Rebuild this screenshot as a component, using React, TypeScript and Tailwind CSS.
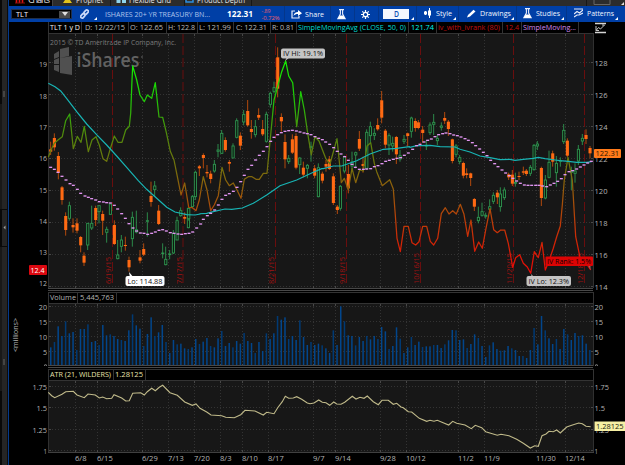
import React from "react";

/* Series are digitised in thirds of a pixel, relative to a local origin. */
type Pt = [number, number];
const trace = (ox: number, oy: number, s: string): Pt[] =>
  s.trim().split(/\s+/).map((p) => {
    const [x, y] = p.split(",").map(Number);
    return [ox + x / 3, oy + y / 3];
  });
const line = (pts: Pt[]) => pts.map(([x, y]) => `${x.toFixed(1)},${y.toFixed(1)}`).join(" ");

const ma50 = [
  ...trace(0, 80, "145,10 165,20 182,33 205,62 230,95 260,132 292,166 320,195 350,228 380,262 415,302 440,328"),
  ...trace(0, 180, "470,55 500,82 525,96 560,104 585,105 600,102"),
  ...trace(200, 165, "0,146 20,145 40,140 75,132 95,133 127,129 160,115 200,90 240,62 290,45 340,22 365,11"),
  ...trace(200, 40, "370,386 400,378 425,378 470,362 510,342 550,328 590,325 628,320"),
  ...trace(410, 70, "0,232 20,227 60,226 90,230 135,231 150,238 180,246 210,258 240,263 270,269 300,268 315,271 340,268 370,265 385,262 405,266 435,270 450,272 475,274 500,277 530,277 545,275"),
];

const ma20 = [
  ...trace(0, 80, "152,262 163,268 174,277 186,289 198,300 210,311 220,316 232,328"),
  ...trace(0, 180, "242,40 255,48 265,52 275,56 287,60 298,65 310,66 320,68 331,69 343,76 353,87 365,101 376,115 387,131 399,144 410,153 421,159 432,160 443,163 455,160 466,156 477,151 488,149 499,153 511,158 522,160 534,162 545,163 556,161 567,160 578,156 590,144"),
  ...trace(200, 165, "2,177 10,163 22,152 32,145 44,135 55,120 66,103 77,91 88,86 100,79 111,67 122,50 133,31 144,13"),
  ...trace(200, 40, "155,376 167,360 178,346 190,334 201,320 212,304 222,292 233,284 244,278 255,274 266,272 277,271 289,273 300,276 312,279 322,281 333,284 345,290 356,295 367,299 377,306 389,313 401,323 412,334 423,342 434,350 445,361 456,373 466,382 478,388 490,388 500,387 512,386 523,380 534,377 546,371 557,364 568,361 580,358 591,355 602,353 613,346 625,339"),
  ...trace(410, 70, "8,238 20,227 30,223 42,216 53,211 64,207 75,200 86,194 98,191 108,189 120,191 131,195 142,197 153,201 165,206 175,211 187,218 197,227 209,237 220,247 231,257 242,271 254,281 264,290 276,300 287,309 298,317 309,325 320,333 331,340 343,345 354,346 365,346 377,346 387,346 398,348 410,350 421,345 432,340 443,334 454,326 465,314 477,305 488,302 500,297 511,291 522,285 533,279 544,274"),
];

const iv = [
  ...trace(0, 80, "145,232 153,210 163,190 175,179 187,170 197,122 209,102 220,206 232,169 243,187 253,139 265,215 276,180 288,170 298,195 309,236 320,244 331,206 343,168 354,187 366,187 377,150 388,139 392,100 396,0"),
  ...trace(0, 0, "398,198 410,240"),
  ...trace(0, 80, "420,45 433,65 442,45 455,55 466,8 477,111 488,112 499,157 511,214 522,240 533,295"),
  ...trace(180, 100, "3,285 14,249 26,322 37,323 48,332 58,300 70,230 81,270 92,332 103,315 115,287 126,202 137,240 148,257 160,249 171,270 183,295 193,238 205,230 216,230 228,238 238,238 250,220 261,220"),
  ...trace(200, 40, "222,180 245,95 257,63 266,108 278,128 290,260 302,155 313,210 323,280 334,345 345,290 357,303 377,355 390,372 411,296 420,385"),
  ...trace(200, 165, "424,53 433,40 445,75 456,10 467,53 479,15 490,18"),
  ...trace(200, 40, "501,318 512,308 523,370"),
  ...trace(200, 165, "530,20 547,62 569,44 580,72 586,150 591,220 601,260 612,184 625,184"),
  ...trace(410, 180, "6,188 17,195 27,185 38,139 50,139 61,184 71,195 83,175 94,101 106,83 117,102 128,92 139,102 151,73 162,103 173,169 183,120 194,214 206,186 217,205 228,145 240,86 251,149 262,158 272,150 284,150 295,190 308,262 317,233 329,224 340,250 352,261 362,280 373,215 385,233 396,187 406,270 418,240 430,205 440,170 451,138 457,75 463,0 474,-68 487,0 497,170 510,232 520,240 532,255 542,270"),
];

const atr = [
  ...trace(0, 285, "145,322 155,332 164,338 186,328 197,320 220,319 231,330 253,338 264,327 286,330 298,339 308,336 320,341 335,340 342,329 365,339 377,348 388,347 398,325 422,323 433,330 442,320 455,310 466,317 478,307 488,301 510,323 532,331 554,351 577,361 588,357 600,370 620,381 633,390 665,392 677,397 703,398 722,389 735,376 765,378 790,390 800,382 822,386 833,368 847,350 856,334 866,340 880,339 890,335 905,343 922,354 930,356"),
  ...trace(310, 285, "0,356 12,354 26,345 37,352 48,353 59,361 71,351 80,357 93,358 104,352 127,334 138,342 150,337 162,340 172,333 190,350 205,359 216,346 235,346 250,358 260,355 273,366 280,368 295,380 305,381 328,400 350,409 360,406 372,409 382,406 416,420 428,409 440,415 465,420 484,431 496,421 515,428 527,440 562,451 573,448 597,452 620,463 640,475 661,489 674,482 685,484 696,452 708,447 717,439 730,440 740,435 751,444 770,426 785,421 806,414 817,416 828,424 842,425"),
];

/* x, high, body top, body bottom, low, up/down */
type Candle = { x: number; h: number; t: number; b: number; l: number; up: boolean };
const candles = (ox: number, oy: number, s: string): Candle[] =>
  s.trim().split(/\s+/).map((c) => {
    const up = c.endsWith("g");
    const [x, h, t, b, l] = c.slice(0, -1).split(",").map(Number);
    return { x: ox + x / 3, h: oy + h / 3, t: oy + t / 3, b: oy + b / 3, l: oy + l / 3, up };
  });

const bars: Candle[] = [
  ...candles(0, 80, "152,185,208,215,225o 163,160,174,202,212o 175,216,228,278,298o"),
  ...candles(0, 180, "186,18,22,60,74o 197,97,108,150,167o 208,65,77,115,122g 219,115,135,142,158o 231,115,130,152,160o 242,168,171,196,217o 252,217,227,248,258o 263,130,130,195,210g 275,77,130,144,150g 287,77,84,120,138o 297,77,77,95,130g 308,92,102,122,165o 320,140,148,157,188g 331,72,72,103,105g 343,121,135,192,195o 353,180,225,236,238g 364,165,180,199,217g 376,170,195,198,212o 387,230,240,262,275o 397,95,112,176,200g 409,92,149,156,160g 420,210,232,242,250o 431,190,207,224,228o 442,97,122,124,170g 453,5,48,66,80o 464,3,18,29,50g 476,75,92,132,135o 488,190,219,221,235g 497,200,238,254,256g 509,210,222,224,238g 520,150,160,219,222g 531,110,122,180,180g 542,82,92,107,110g 554,97,111,116,132o 565,85,85,143,145g"),
  ...candles(180, 100, "26,325,325,356,362g 37,285,290,320,324g 46,212,217,290,300g 58,195,199,205,228o 70,160,165,174,205o 81,195,216,220,232o 92,212,221,237,250o 103,180,193,213,218g 114,132,150,154,172g 125,90,100,160,162g 136,112,120,150,155o 148,180,186,191,215o 159,130,138,174,174g 170,55,62,112,115g 181,97,107,137,150o 191,30,43,66,76g 203,0,33,76,80o 214,60,87,96,116o 226,60,80,104,112g 236,25,45,53,60o 248,60,87,103,108o 259,35,43,124,128g"),
  ...candles(200, 40, "211,155,160,193,203g 222,125,143,154,160g 233,22,52,146,172o 244,220,231,244,275o"),
  ...candles(180, 100, "315,103,126,178,205o 326,165,175,185,192g 337,103,118,158,162o 348,100,108,203,208o 359,172,174,194,222g 370,185,203,224,232o 382,192,196,205,235g 393,125,140,142,185g 404,195,205,227,235o 415,190,203,290,292g 427,215,221,242,250o 438,180,192,200,215o 448,168,178,207,210o"),
  ...candles(200, 165, "400,25,34,114,120o 412,120,125,135,147o 421,60,64,130,137g 433,-28,-25,18,25g 445,0,27,70,85o"),
  ...candles(200, 40, "456,335,366,378,395g 467,335,338,345,385g 478,273,297,326,333o 489,350,372,378,398o 500,268,277,385,390g 511,245,260,287,310g 523,265,280,286,300g 533,235,255,268,272o 545,153,181,233,250o 556,267,272,314,325o 567,280,287,315,345g 578,290,310,318,335g 589,288,291,343,372o 600,330,347,357,365g 612,285,298,304,312g 623,278,280,288,320o"),
  ...candles(410, 70, "4,140,144,184,203g 16,145,153,174,185o 25,150,157,174,178o 38,168,179,189,218o 49,210,226,228,240g 60,157,165,188,195g 71,132,157,163,195g 82,195,205,212,225g 94,157,168,172,182g 104,126,144,152,162o 115,150,155,177,198o 127,206,208,273,280o 138,222,228,253,262g 149,255,263,275,283g 160,275,279,317,325o 170,295,310,315,325o 182,308,310,324,348o 296,308,313,322,330o 307,300,314,341,348o 316,308,337,340,350g 327,305,318,321,330o 340,290,304,308,315o 349,297,302,312,318o 361,285,292,310,318g 372,222,226,299,302g 382,213,222,228,240g 394,290,294,384,408o 406,315,330,384,388g 417,242,277,322,325g 428,242,250,275,290o 439,258,280,308,350g 451,262,272,274,290g 461,162,181,215,222g 472,205,212,257,262o 484,290,305,307,360g 495,280,303,310,338g 505,225,238,273,285g 517,192,205,213,225g 528,178,195,207,222o 540,228,234,250,265o"),
  ...candles(410, 180, "193,54,57,80,93o 205,80,112,122,130g 216,68,95,106,110g 227,98,106,109,116g 239,58,80,88,100g 250,37,46,64,72g 262,30,38,52,72o 271,22,42,80,95g 283,22,30,53,60g"),
];

/* Top of every volume bar, in thirds of a pixel below y = 285. */
const volume = [
  187, 171, 124, 153, 109, 145, 141, 195, 132, 132, 118, 171, 168, 180, 120, 151, 148, 153, 162, 165, 168, 136, 88, 121,
  131, 183, 147, 97, 153, 142, 120, 171, 204, 165, 178, 176, 190, 192, 187, 162, 177, 170, 159, 183, 187, 160, 138, 183,
  174, 187, 168, 176, 144, 168, 174, 204, 171, 198, 145, 162, 145, 93, 104, 97, 162, 153, 165, 106, 156, 180, 171, 180,
  176, 181, 190, 204, 136, 180, 64, 109, 151, 153, 181, 156, 168, 153, 163, 153, 162, 126, 139, 192, 183, 127, 161, 204,
  187, 156, 180, 170, 186, 184, 184, 180, 180, 189, 178, 166, 135, 136, 165, 163, 189, 177, 148, 159, 183, 216, 181, 172,
  192, 197, 196, 183, 190, 195, 213, 213, 219, 195, 129, 178, 93, 136, 160, 177, 162, 192, 132, 148, 165, 144, 153, 151,
  176, 195,
];

const weeks: [number, string][] = [
  [75.5, "6/8"], [97.5, "6/15"], [142.5, "6/29"], [168.5, "7/13"], [194.5, "7/20"], [220.5, "8/3"], [242.5, "8/10"],
  [268.5, "8/17"], [313.5, "9/7"], [335.5, "9/14"], [380.5, "9/28"], [406.5, "10/12"], [458.5, "11/2"], [484.5, "11/9"],
  [536.5, "11/30"], [565.5, "12/14"],
];
const expiries: [number, string][] = [
  [112.5, "6/19/15"], [183, "7/17/15"], [275.5, "8/21/15"], [346.5, "9/18/15"], [420.5, "10/16/15"],
  [513.5, "11/20/15"], [584.5, "12/18/15"],
];

const Grid = ({ top, bottom, rows }: { top: number; bottom: number; rows: number[] }) => (
  <g>
    <rect x="48" y={top} width="545" height={bottom - top} fill="#171717" />
    <g stroke="#333333" strokeWidth="1" strokeDasharray="1 2">
      {weeks.map(([x]) => <line key={x} x1={x} x2={x} y1={top} y2={bottom} />)}
      {rows.map((y) => <line key={y} x1="49" x2="593" y1={y} y2={y} />)}
    </g>
    <g stroke="#484848">
      {weeks.map(([x]) => <path key={x} d={`M${x} ${top}v2M${x} ${bottom - 2}v2`} />)}
      {rows.map((y) => <path key={y} d={`M48 ${y}h3M591 ${y}h3`} />)}
      <path d={`M48.5 ${top}V${bottom}M593.5 ${top}V${bottom}`} stroke="#303030" />
    </g>
  </g>
);

const Label = ({ x, y, w, children, anchor = "start", fill = "#b4b4b4" }: {
  x: number; y: number; w: number; children: string; anchor?: "start" | "end"; fill?: string;
}) => (
  <text x={x} y={y} textLength={w} lengthAdjust="spacingAndGlyphs" textAnchor={anchor} fill={fill} fontSize="7.8">
    {children}
  </text>
);

const Cell = ({ box, color = "", children }: { box: string; color?: string; children?: React.ReactNode }) => (
  <div className={`flex h-full shrink-0 items-center border-r border-[#333333] whitespace-nowrap ${box} ${color}`}>
    {children}
  </div>
);

/* A caption stretched to an exact width. */
const Fit = ({ w, size = 8, weight = 400, children }: { w: number; size?: number; weight?: number; children: string }) => (
  <svg width={w} height="11" className="block shrink-0 overflow-visible">
    <text x="0" y="8.4" textLength={w} lengthAdjust="spacingAndGlyphs" fontSize={size} fontWeight={weight} fill="currentColor">
      {children}
    </text>
  </svg>
);

const Corner = () => (
  <svg width="3" height="3" className="block"><path d="M3 0v3H0z" fill="#ffffff" /></svg>
);

const Flask = () => (
  <svg width="9" height="11" viewBox="0 0 9 11" className="block shrink-0">
    <path d="M2 .6h5M3.4 1v4L.9 9.6h7.2L5.6 5V1" fill="none" stroke="#e8eefc" strokeWidth="1.1" />
    <path d="M2.6 6.5h3.8L8 9.8H1z" fill="#ffffff" />
  </svg>
);

const Tool = ({ box, children }: { box: string; children: React.ReactNode }) => (
  <div className={`flex h-full shrink-0 items-end justify-between border-l border-[#04368a] pr-[2px] pb-[2px] ${box}`}>
    <div className="flex h-[14px] items-center gap-[4px]">{children}</div>
    <Corner />
  </div>
);

const TopTabs = () => (
  <div className="flex h-[6px] shrink-0 overflow-hidden bg-[#2c2c2c] text-[#e4e4e4]">
    <div className="flex w-[44px] items-end border-r border-[#454545] bg-black">
      <svg width="44" height="6" className="block">
        <path d="M7.5 0v3M10.5 0v3M13.5 0v3" stroke="#e01414" strokeWidth="1.6" />
        <path d="M6 3h10" stroke="#8c0c0c" />
        <text x="19" y="3" fontSize="9" textLength="22" fill="currentColor">Charts</text>
      </svg>
    </div>
    <svg width="504" height="6" className="block">
      <path d="M10 3l2-3h5l2 3z" fill="#e2c21c" />
      <text x="23" y="3" fontSize="9" textLength="27" lengthAdjust="spacingAndGlyphs" fill="currentColor">Prophet</text>
      <path d="M57.500 0v6M131.500 0v6M198.500 0v6" stroke="#171717" />
      <path d="M63.500 1h4M69 1h4" stroke="#8fd4ec" strokeWidth="4" />
      <text x="76" y="3" fontSize="9" textLength="42" lengthAdjust="spacingAndGlyphs" fill="currentColor">Flexible Grid</text>
      <path d="M133 0v2h7V0" fill="none" stroke="#2d8fe0" strokeWidth="1.500" />
      <text x="144" y="3" fontSize="9" textLength="48" lengthAdjust="spacingAndGlyphs" fill="currentColor">Product Depth</text>
    </svg>
    <svg width="68" height="6" className="block">
      <path d="M29.500 0v6" stroke="#171717" />
      <path d="M37 0v4.500h16V0" fill="none" stroke="#666666" />
      <path d="M67 2v3h-3z" fill="#dddddd" />
    </svg>
  </div>
);

const Toolbar = () => (
  <div className="flex h-[16px] shrink-0 items-center overflow-hidden bg-[#003fa6] text-[#f2f6ff]">
    <div className="ml-[2px] flex h-[10px] w-[61px] shrink-0 items-center justify-between border border-[#20304c] bg-black pl-[4px]">
      <Fit w={12} size={7.6}>TLT</Fit>
      <div className="mr-px flex h-[7px] w-[11px] items-center justify-center bg-[#4a4a4a]">
        <svg width="6" height="4" className="block"><path d="M0 0h6L3 4z" fill="#e0e0e0" /></svg>
      </div>
    </div>
    <div className="ml-[8px] flex h-full w-[17px] shrink-0 items-end justify-between pb-[2px]">
      <svg width="9" height="12" viewBox="0 0 9 12" className="block">
        <g fill="none" stroke="#c9d8f8" strokeWidth="1.700" transform="rotate(-48 4.500 6)">
          <rect x="-.5" y="4.500" width="5" height="3" rx="1.500" />
          <rect x="4.500" y="4.500" width="5" height="3" rx="1.500" />
        </g>
      </svg>
      <Corner />
    </div>
    <div className="ml-[8px] w-[116px] shrink-0 text-[#aec3ec]"><Fit w={105}>ISHARES 20+ YR TREASURY BN...</Fit></div>
    <div className="ml-[6px] w-[32px] shrink-0 text-white"><Fit w={26} size={8.8} weight={700}>122.31</Fit></div>
    <div className="ml-[2px] flex h-full w-[23px] shrink-0 flex-col justify-center text-[#f0606a]">
      <svg width="22" height="14" className="block">
        <text x="0.500" y="6" fontSize="6" textLength="9" lengthAdjust="spacingAndGlyphs" fill="currentColor">-.89</text>
        <text x="0.500" y="12.500" fontSize="6" textLength="18" lengthAdjust="spacingAndGlyphs" fill="currentColor">-0.72%</text>
      </svg>
    </div>
    <div className="flex h-full w-[46px] shrink-0 items-center gap-[3px] border-l border-[#04368a] pl-[6px]">
      <svg width="11" height="10" viewBox="0 0 11 10" className="block shrink-0">
        <path d="M4 2H1v7h7V7" fill="none" stroke="#e6ecfa" strokeWidth="1.200" />
        <path d="M2.500 7C3 4 4.500 3 7 3V1l4 3.200L7 7V5C5 5 3.700 5.500 2.500 7z" fill="#fff" />
      </svg>
      <Fit w={19}>Share</Fit>
    </div>
    <div className="flex h-full w-[24px] shrink-0 items-center border-l border-[#04368a] pl-[6px]"><Flask /></div>
    <div className="flex h-full w-[24px] shrink-0 items-center border-l border-[#04368a] pl-[6px]">
      <svg width="9" height="9" viewBox="0 0 9 9" className="block">
        <circle cx="4.500" cy="4.500" r="2.200" fill="none" stroke="#fff" strokeWidth="1.300" />
        <path d="M4.500 0v2M4.500 7v2M0 4.500h2M7 4.500h2M1.300 1.300l1.300 1.300M6.400 6.400l1.300 1.300M7.700 1.300L6.400 2.600M2.600 6.400L1.300 7.700" stroke="#fff" strokeWidth="1.200" />
      </svg>
    </div>
    <div className="flex h-full w-[38px] shrink-0 items-end justify-between border-l border-[#04368a] pr-[2px] pb-[2px] pl-[4px]">
      <div className="mb-px flex h-[10px] w-[26px] items-center justify-center bg-[#f4f7ff] text-[#1250b4]">
        <Fit w={5} weight={600}>D</Fit>
      </div>
      <Corner />
    </div>
    <Tool box="w-[42px] pl-[7px]">
      <svg width="8" height="10" className="block shrink-0">
        <path d="M1.500 3v4M5.500 0v10" stroke="#fff" />
        <path d="M0 3.500h3v3H0zM4 2.500h3v5H4z" fill="#fff" />
      </svg>
      <Fit w={16}>Style</Fit>
    </Tool>
    <Tool box="w-[58px] pl-[8px]">
      <svg width="9" height="9" className="block shrink-0"><path d="M0 8.500L1 6 6.500.7l2 1.700L3 7.500z" fill="#fff" /></svg>
      <Fit w={31}>Drawings</Fit>
    </Tool>
    <Tool box="w-[50px] pl-[6px]"><Flask /><Fit w={24}>Studies</Fit></Tool>
    <Tool box="w-[54px] pl-[7px]">
      <svg width="9" height="10" viewBox="0 0 9 10" className="block shrink-0">
        <path d="M0 1h9M0 6l3-2.500L5.500 5 9 2M0 9l3-2h2l4-2" fill="none" stroke="#e6ecfa" strokeWidth="1.200" />
      </svg>
      <Fit w={27}>Patterns</Fit>
    </Tool>
  </div>
);

const PricePanel = () => (
  <div className="flex h-[270px] shrink-0 flex-col">
    <div className="flex h-[12px] shrink-0 text-[#bababa]">
      <div className="w-[39px] shrink-0" />
      <div className="flex w-[546px] shrink-0 border-b border-l border-[#333333] bg-black">
        <Cell box="w-[33px] pl-px" color="text-[#f4f4f4]"><Fit w={30}>TLT 1 y D</Fit></Cell>
        <Cell box="w-[47px] pl-[3px]"><Fit w={40}>D: 12/22/15</Fit></Cell>
        <Cell box="w-[38px] pl-px"><Fit w={33}>O: 122.65</Fit></Cell>
        <Cell box="w-[31px] pl-px"><Fit w={27}>H: 122.8</Fit></Cell>
        <Cell box="w-[36px] pl-px"><Fit w={32}>L: 121.99</Fit></Cell>
        <Cell box="w-[37px] pl-[2px]"><Fit w={31}>C: 122.31</Fit></Cell>
        <Cell box="w-[26px] pl-px"><Fit w={22}>R: 0.81</Fit></Cell>
        <Cell box="w-[112px] pl-px" color="text-[#00dcd4]"><Fit w={108}>SimpleMovingAvg (CLOSE, 50, 0)</Fit></Cell>
        <Cell box="w-[28px] pl-[2px]" color="text-[#00f4ec]"><Fit w={23}>121.74</Fit></Cell>
        <Cell box="w-[66px] pl-px" color="text-[#c01010]"><Fit w={62}>iv_with_ivrank (80)</Fit></Cell>
        <Cell box="w-[19px] pl-[2px]" color="text-[#c01010]"><Fit w={14}>12.4</Fit></Cell>
        <Cell box="w-[57px] pl-px" color="text-[#d48aec]"><Fit w={53}>SimpleMoving...</Fit></Cell>
      </div>
      <div className="w-[31px] shrink-0">
        <svg width="14" height="12" className="block">
          <path d="M1 1.500h11M1 10.500h11" stroke="#d4d4d4" strokeWidth="1.300" />
          <path d="M2 8.500l2.500-3 2 1.500L10.500 3M8 3h2.500M2 4v4.500h3" fill="none" stroke="#c4c4c4" />
        </svg>
      </div>
    </div>
    <svg width="616" height="258" viewBox="9 34 616 258" className="block shrink-0">
      <defs>
        <linearGradient id="ivHeat" gradientUnits="userSpaceOnUse" x1="0" y1="62" x2="0" y2="275">
          <stop offset="0" stopColor="#14f000" />
          <stop offset="0.18" stopColor="#20c408" />
          <stop offset="0.34" stopColor="#50880c" />
          <stop offset="0.5" stopColor="#74700c" />
          <stop offset="0.62" stopColor="#9a580a" />
          <stop offset="0.76" stopColor="#c03a08" />
          <stop offset="0.9" stopColor="#dc1804" />
          <stop offset="1" stopColor="#ee0808" />
        </linearGradient>
      </defs>
      <Grid top={34} bottom={288} rows={[62.5, 94.5, 126.5, 158.5, 190.5, 222.5, 254.5, 286.5]} />

      <g fill="#505050">
        <path d="M54 54l5-3v6l-5 2zM54 60l5-2v6h-5zM54 65h5v7l-5-2zM60 49l9-2v9l-9 2zM60 58l12-2v19l-12-2z" />
        <text x="76.500" y="67" fontSize="20" fontWeight="600" textLength="63" lengthAdjust="spacingAndGlyphs" fill="#626262">iShares</text>
        <circle cx="142" cy="57" r="0.900" />
      </g>
      <Label x={50} y={45.300} w={126} fill="#7c7c7c">2015 © TD Ameritrade IP Company, Inc.</Label>

      {expiries.map(([x, day]) => (
        <g key={day}>
          <line x1={x} x2={x} y1="34" y2="285" stroke="#6a0e0e" strokeDasharray="9 3" />
          <text transform={`translate(${x - 1.500} 284) rotate(-90)`} fontSize="8" textLength={day.length > 7 ? 31 : 27} lengthAdjust="spacingAndGlyphs" fill="#9c1212">{day}</text>
        </g>
      ))}

      {bars.map((c, i) => c.up ? (
        <g key={i} stroke="#2f9650" strokeWidth="0.900" fill="none">
          <path d={`M${c.x} ${c.h}V${c.t}M${c.x} ${c.b}V${c.l}`} />
          <rect x={c.x - 1} y={c.t} width="2.200" height={Math.max(c.b - c.t, 0.600)} fill="#0c1c10" />
        </g>
      ) : (
        <g key={i}>
          <path d={`M${c.x} ${c.h}V${c.l}`} stroke="#c4500c" strokeWidth="0.900" />
          <rect x={c.x - 1.500} y={c.t} width="3.100" height={Math.max(c.b - c.t, 1)} fill="#ff6a13" />
        </g>
      ))}

      <polyline points={line(iv)} fill="none" stroke="url(#ivHeat)" strokeWidth="1.250" strokeLinejoin="round" />
      <polyline points={line(ma50)} fill="none" stroke="#18b4b4" strokeWidth="1.200" />
      {ma20.map(([x, y], i) => <line key={i} x1={x - 1.500} x2={x + 1.500} y1={y} y2={y} stroke="#e094f0" strokeWidth="1.350" />)}

      {([["19", 67], ["18", 99], ["17", 129.500], ["16", 161], ["15", 192.500], ["14", 224], ["13", 255], ["12", 286]] as [string, number][]).map(([t, y]) => (
        <Label key={t} x={47} y={y} w={8} anchor="end">{t}</Label>
      ))}
      {([["128", 65.500], ["126", 97.500], ["124", 129.500], ["122", 161.500], ["120", 193.500], ["118", 225.500], ["116", 257.500], ["114", 289.500]] as [string, number][]).map(([t, y]) => (
        <Label key={t} x={594.500} y={y} w={13}>{t}</Label>
      ))}

      <rect x="29" y="265" width="18" height="10" rx="1" fill="#dc0810" />
      <Label x={30.500} y={272.800} w={14} fill="#ffffff">12.4</Label>
      <rect x="594" y="149" width="27" height="9" rx="1" fill="#ff7a1a" />
      <Label x={595.500} y={156.300} w={23.500} fill="#2c1400">122.31</Label>

      <path d="M285 61l2-4h3z" fill="#c4c4c4" />
      <rect x="281" y="48.500" width="44" height="10" rx="2" fill="#c4c4c4" />
      <Label x={283} y={56.200} w={40} fill="#101010">IV Hi: 19.1%</Label>
      <path d="M129 272l1 6h4z" fill="#ffffff" />
      <rect x="125.500" y="276" width="39" height="10" rx="2" fill="#ffffff" />
      <Label x={127.500} y={283.800} w={35} fill="#101010">Lo: 114.88</Label>
      <path d="M531 274l1 4h3z" fill="#c4c4c4" />
      <rect x="526.500" y="276" width="44.500" height="10" rx="2" fill="#c4c4c4" />
      <Label x={528.500} y={283.800} w={40.500} fill="#101010">IV Lo: 12.3%</Label>
      <path d="M588 265l2.500 5v-5z" fill="#a06060" />
      <rect x="545.500" y="256.500" width="47.500" height="9.500" rx="1" fill="#dc0404" />
      <Label x={547} y={264} w={44} fill="#100000">IV Rank: 1.5%</Label>

      <path d="M48 288.500h545M48 290.500h545" stroke="#484848" />
    </svg>
  </div>
);

const StudyHeader = ({ color, name, nameWidth, value, valueWidth, a, b }: {
  color: string; name: string; nameWidth: number; value: string; valueWidth: number; a: string; b: string;
}) => (
  <div className="flex h-[12px] shrink-0">
    <div className="w-[39px] shrink-0" />
    <div className="flex w-[546px] shrink-0 border border-[#333333] bg-black">
      <Cell box={a} color={color}><div className="mb-[2px]"><Fit w={nameWidth}>{name}</Fit></div></Cell>
      <Cell box={b} color={color}><div className="mb-[2px]"><Fit w={valueWidth}>{value}</Fit></div></Cell>
    </div>
  </div>
);

const VolumePanel = () => (
  <div className="flex h-[77px] shrink-0 flex-col">
    <StudyHeader color="text-[#b4b4b4]" name="Volume" nameWidth={26} value="5,445,763" valueWidth={34} a="w-[29px] pl-px" b="w-[39px] pl-[2px]" />
    <svg width="616" height="65" viewBox="9 304 616 65" className="block shrink-0">
      <Grid top={304} bottom={366} rows={[306.500, 321.500, 336.500, 351.500]} />
      {volume.map((v, i) => (
        <rect key={i} x={50 + i * 3.718} y={285 + v / 3} width="1.500" height={80.500 - v / 3} fill={i % 3 === 1 ? "#003a74" : "#02468c"} />
      ))}
      {([["20", 309.500], ["15", 324.500], ["10", 339.500], ["5", 354.500]] as [string, number][]).map(([t, y]) => (
        <g key={t}>
          <Label x={47} y={y} w={t.length * 4.100} anchor="end">{t}</Label>
          <Label x={594.500} y={y} w={t.length * 4.300}>{t}</Label>
        </g>
      ))}
      <path d="M44 365.500q1.500-1.500 3 0M595 365.500q1.500-1.500 3 0" fill="none" stroke="#999999" />
      <text transform="translate(18 352) rotate(-90)" fontSize="7.800" textLength="34" lengthAdjust="spacingAndGlyphs" fill="#b4b4b4">&lt;millions&gt;</text>
      <path d="M48 365.500h545M48 367.500h545" stroke="#484848" />
    </svg>
  </div>
);

const AtrPanel = () => (
  <div className="flex h-[96px] shrink-0 flex-col">
    <StudyHeader color="text-[#e8e2ac]" name="ATR (21, WILDERS)" nameWidth={61} value="1.28125" valueWidth={28} a="w-[65px] pl-px" b="w-[32px] pl-px" />
    <svg width="616" height="84" viewBox="9 381 616 84" className="block shrink-0">
      <Grid top={381} bottom={452} rows={[386.500, 407.500, 429.500, 450.500]} />
      <path d="M48 452.500h546" stroke="#404040" />
      <polyline points={line(atr)} fill="none" stroke="#c0ba8a" strokeWidth="1.100" />
      {([["1.75", 389.800, 14.500], ["1.5", 411, 10.500], ["1.25", 432.500, 14.500], ["1", 453.500, 3.500]] as [string, number, number][]).map(([t, y, w]) => (
        <g key={t}>
          <Label x={47} y={y} w={w} anchor="end">{t}</Label>
          <Label x={594.500} y={y} w={w}>{t}</Label>
        </g>
      ))}
      <rect x="594.500" y="421.500" width="30.500" height="9.500" fill="#f6f0a4" />
      <Label x={596} y={429} w={27.500} fill="#202010">1.28125</Label>
      {weeks.map(([x, t]) => (
        <Label key={t} x={x - 0.500} y={461} w={[0, 0, 0, 11.500, 15.700, 19.700][t.length]}>{t}</Label>
      ))}
    </svg>
  </div>
);

export default function App() {
  return (
    <div className="flex h-[465px] w-[625px] overflow-hidden bg-black" style={{ fontFamily: '"Open Sans", "Noto Sans", sans-serif' }}>
      <div className="flex w-[9px] shrink-0 border-r border-[#043a8c] bg-[#0c0c0c]">
        <svg width="8" height="465" className="block">
          <path d="M0 0h2v465H0z" fill="#080808" />
          <path d="M2 0h5v465H2z" fill="#252525" />
          <path d="M0 104h2v105H0zM0 247h2v144H0z" fill="#181818" />
          <path d="M2 209.500h5M2 246.500h5" stroke="#080808" />
          <path d="M5.500 225.500v4l-2-2z" fill="#a0a0a0" />
          <path d="M3 91h2v6H3zM3 359h2v6H3z" fill="#444444" />
        </svg>
      </div>
      <div className="flex w-[616px] shrink-0 flex-col">
        <TopTabs />
        <Toolbar />
        <PricePanel />
        <VolumePanel />
        <AtrPanel />
      </div>
    </div>
  );
}
